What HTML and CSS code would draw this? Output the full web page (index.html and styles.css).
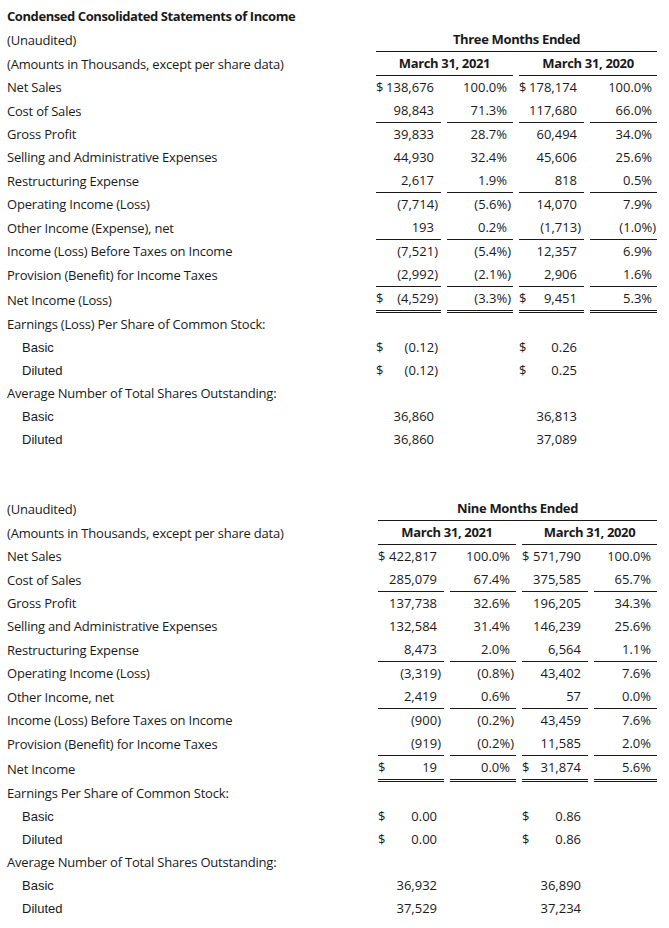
FILE: index.html
```html
<!DOCTYPE html>
<html lang="en">
<head>
<meta charset="utf-8">
<title>Condensed Consolidated Statements of Income</title>
<link rel="stylesheet" href="styles.css">
</head>
<body>
<div class="page">
  <table class="stmt stmt-three">
    <colgroup>
      <col class="c-label"><col class="c-a"><col class="c-b"><col class="c-c"><col class="c-d">
    </colgroup>
    <tr><th class="title" colspan="5">Condensed Consolidated Statements of Income</th></tr>
    <tr><td class="label">(Unaudited)</td><th class="head rule" colspan="4">Three Months Ended</th></tr>
    <tr><td class="label">(Amounts in Thousands, except per share data)</td><th class="head rule" colspan="2">March 31, 2021</th><th class="head rule" colspan="2">March 31, 2020</th></tr>
    <tr><td class="label">Net Sales</td><td class="num"><span class="cur">$</span>138,676</td><td class="pct">100.0%</td><td class="num"><span class="cur">$</span>178,174</td><td class="pct">100.0%</td></tr>
    <tr class="rule"><td class="label">Cost of Sales</td><td class="num">98,843</td><td class="pct">71.3%</td><td class="num">117,680</td><td class="pct">66.0%</td></tr>
    <tr><td class="label">Gross Profit</td><td class="num">39,833</td><td class="pct">28.7%</td><td class="num">60,494</td><td class="pct">34.0%</td></tr>
    <tr><td class="label">Selling and Administrative Expenses</td><td class="num">44,930</td><td class="pct">32.4%</td><td class="num">45,606</td><td class="pct">25.6%</td></tr>
    <tr class="rule"><td class="label">Restructuring Expense</td><td class="num">2,617</td><td class="pct">1.9%</td><td class="num">818</td><td class="pct">0.5%</td></tr>
    <tr><td class="label">Operating Income (Loss)</td><td class="num neg">(7,714)</td><td class="pct neg">(5.6%)</td><td class="num">14,070</td><td class="pct">7.9%</td></tr>
    <tr class="rule"><td class="label">Other Income (Expense), net</td><td class="num">193</td><td class="pct">0.2%</td><td class="num neg">(1,713)</td><td class="pct neg">(1.0%)</td></tr>
    <tr><td class="label">Income (Loss) Before Taxes on Income</td><td class="num neg">(7,521)</td><td class="pct neg">(5.4%)</td><td class="num">12,357</td><td class="pct">6.9%</td></tr>
    <tr class="rule"><td class="label">Provision (Benefit) for Income Taxes</td><td class="num neg">(2,992)</td><td class="pct neg">(2.1%)</td><td class="num">2,906</td><td class="pct">1.6%</td></tr>
    <tr class="total"><td class="label">Net Income (Loss)</td><td class="num neg"><span class="cur">$</span>(4,529)</td><td class="pct neg">(3.3%)</td><td class="num"><span class="cur">$</span>9,451</td><td class="pct">5.3%</td></tr>
    <tr><td class="label">Earnings (Loss) Per Share of Common Stock:</td><td></td><td></td><td></td><td></td></tr>
    <tr><td class="label sub">Basic</td><td class="num neg"><span class="cur">$</span>(0.12)</td><td></td><td class="num"><span class="cur">$</span>0.26</td><td></td></tr>
    <tr><td class="label sub">Diluted</td><td class="num neg"><span class="cur">$</span>(0.12)</td><td></td><td class="num"><span class="cur">$</span>0.25</td><td></td></tr>
    <tr><td class="label">Average Number of Total Shares Outstanding:</td><td></td><td></td><td></td><td></td></tr>
    <tr><td class="label sub">Basic</td><td class="num">36,860</td><td></td><td class="num">36,813</td><td></td></tr>
    <tr><td class="label sub">Diluted</td><td class="num">36,860</td><td></td><td class="num">37,089</td><td></td></tr>
  </table>

  <table class="stmt stmt-nine">
    <colgroup>
      <col class="c-label"><col class="c-a"><col class="c-b"><col class="c-c"><col class="c-d">
    </colgroup>
    <tr><td class="label">(Unaudited)</td><th class="head rule" colspan="4">Nine Months Ended</th></tr>
    <tr><td class="label">(Amounts in Thousands, except per share data)</td><th class="head rule" colspan="2">March 31, 2021</th><th class="head rule" colspan="2">March 31, 2020</th></tr>
    <tr><td class="label">Net Sales</td><td class="num"><span class="cur">$</span>422,817</td><td class="pct">100.0%</td><td class="num"><span class="cur">$</span>571,790</td><td class="pct">100.0%</td></tr>
    <tr class="rule"><td class="label">Cost of Sales</td><td class="num">285,079</td><td class="pct">67.4%</td><td class="num">375,585</td><td class="pct">65.7%</td></tr>
    <tr><td class="label">Gross Profit</td><td class="num">137,738</td><td class="pct">32.6%</td><td class="num">196,205</td><td class="pct">34.3%</td></tr>
    <tr><td class="label">Selling and Administrative Expenses</td><td class="num">132,584</td><td class="pct">31.4%</td><td class="num">146,239</td><td class="pct">25.6%</td></tr>
    <tr class="rule"><td class="label">Restructuring Expense</td><td class="num">8,473</td><td class="pct">2.0%</td><td class="num">6,564</td><td class="pct">1.1%</td></tr>
    <tr><td class="label">Operating Income (Loss)</td><td class="num neg">(3,319)</td><td class="pct neg">(0.8%)</td><td class="num">43,402</td><td class="pct">7.6%</td></tr>
    <tr class="rule"><td class="label">Other Income, net</td><td class="num">2,419</td><td class="pct">0.6%</td><td class="num">57</td><td class="pct">0.0%</td></tr>
    <tr><td class="label">Income (Loss) Before Taxes on Income</td><td class="num neg">(900)</td><td class="pct neg">(0.2%)</td><td class="num">43,459</td><td class="pct">7.6%</td></tr>
    <tr class="rule"><td class="label">Provision (Benefit) for Income Taxes</td><td class="num neg">(919)</td><td class="pct neg">(0.2%)</td><td class="num">11,585</td><td class="pct">2.0%</td></tr>
    <tr class="total"><td class="label">Net Income</td><td class="num"><span class="cur">$</span>19</td><td class="pct">0.0%</td><td class="num"><span class="cur">$</span>31,874</td><td class="pct">5.6%</td></tr>
    <tr><td class="label">Earnings Per Share of Common Stock:</td><td></td><td></td><td></td><td></td></tr>
    <tr><td class="label sub">Basic</td><td class="num"><span class="cur">$</span>0.00</td><td></td><td class="num"><span class="cur">$</span>0.86</td><td></td></tr>
    <tr><td class="label sub">Diluted</td><td class="num"><span class="cur">$</span>0.00</td><td></td><td class="num"><span class="cur">$</span>0.86</td><td></td></tr>
    <tr><td class="label">Average Number of Total Shares Outstanding:</td><td></td><td></td><td></td><td></td></tr>
    <tr><td class="label sub">Basic</td><td class="num">36,932</td><td></td><td class="num">36,890</td><td></td></tr>
    <tr><td class="label sub">Diluted</td><td class="num">37,529</td><td></td><td class="num">37,234</td><td></td></tr>
  </table>
</div>
</body>
</html>
```

FILE: styles.css
```css
html, body {
  margin: 0;
  padding: 0;
  background: #ffffff;
}

body {
  font-family: "Open Sans", "Liberation Sans", sans-serif;
  font-size: 13px;
  color: #1a1a1a;
}

.page {
  padding: 5px 0 0 7px;
}

.stmt {
  border-collapse: separate;
  border-spacing: 6px 0;
  margin-left: -6px;
  table-layout: fixed;
  width: 662px;
}

.stmt-nine {
  margin-top: 46px;
}

.stmt-three .c-label { width: 363px; }
.stmt-three .c-a { width: 65px; }
.stmt-three .c-b { width: 66px; }
.stmt-three .c-c { width: 65px; }
.stmt-three .c-d { width: 67px; }

.stmt-nine .c-label { width: 365px; }
.stmt-nine .c-a { width: 66px; }
.stmt-nine .c-b { width: 66px; }
.stmt-nine .c-c { width: 66px; }
.stmt-nine .c-d { width: 63px; }

.stmt th,
.stmt td {
  padding: 0;
  height: 23px;
  line-height: 23px;
  white-space: nowrap;
  vertical-align: middle;
}

.title {
  text-align: left;
  font-weight: 700;
  letter-spacing: -0.42px;
}

.label {
  text-align: left;
  letter-spacing: -0.2px;
}

.label.sub {
  padding-left: 15px;
  font-family: "Liberation Sans", Arial, sans-serif;
  letter-spacing: 0;
}

.head {
  text-align: center;
  font-weight: 700;
  letter-spacing: -0.35px;
}

.rule {
  border-bottom: 1px solid #1a1a1a;
}

tr.rule td.num,
tr.rule td.pct {
  border-bottom: 1px solid #1a1a1a;
}

tr.total td.num,
tr.total td.pct {
  border-bottom: 3px double #1a1a1a;
}

.num {
  text-align: right;
  padding-right: 7px !important;
}

.pct {
  text-align: right;
  padding-right: 6px !important;
}

.num.neg {
  padding-right: 3px !important;
}

.pct.neg {
  padding-right: 2px !important;
}

.stmt-three td.pct:last-child {
  padding-right: 5px !important;
}

.stmt-three td.pct.neg:last-child {
  padding-right: 1px !important;
}

.cur {
  float: left;
}
```
